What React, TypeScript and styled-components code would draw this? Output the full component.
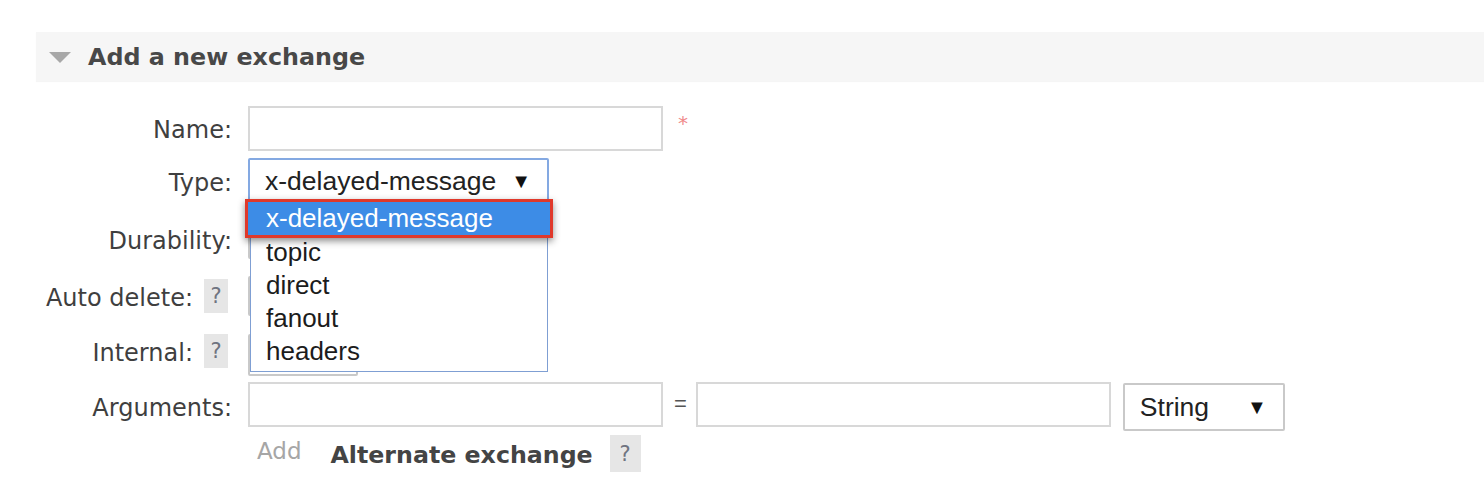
import React, { FC, Fragment } from 'react'
import styled, { createGlobalStyle } from 'styled-components'

const GlobalStyle = createGlobalStyle`
  html, body {
    margin: 0;
    padding: 0;
    background: #ffffff;
  }
  body {
    font-family: 'DejaVu Sans', Verdana, sans-serif;
    color: #444444;
  }
`

const Page = styled.div`
  padding: 32px 0 0 36px;
  overflow: hidden;
`

const SectionHeader = styled.div`
  display: flex;
  align-items: center;
  height: 49px;
  background: #f6f6f6;
  box-shadow: 0 1px 1px rgba(0, 0, 0, 0.04);
`

const Caret = styled.span`
  width: 0;
  height: 0;
  margin: 2px 17px 0 13px;
  border-left: 11px solid transparent;
  border-right: 11px solid transparent;
  border-top: 11px solid #a8a8a8;
`

const Title = styled.h2`
  margin: 0;
  font-size: 23.8px;
  font-weight: 700;
  color: #484848;
`

const Form = styled.div`
  padding-top: 20px;
`

const Row = styled.div<{ $h?: number }>`
  display: grid;
  grid-template-columns: 196px 1fr;
  column-gap: 16px;
  align-items: center;
  height: ${(p) => p.$h ?? 55}px;
`

const Label = styled.div`
  display: flex;
  justify-content: flex-end;
  align-items: center;
  padding-top: 3px;
  font-size: 24px;
  color: #3f3f3f;
  white-space: nowrap;
`

const Help = styled.span<{ $big?: boolean }>`
  display: inline-flex;
  align-items: center;
  justify-content: center;
  width: ${(p) => (p.$big ? 31 : 24)}px;
  height: ${(p) => (p.$big ? 37 : 34)}px;
  margin-left: ${(p) => (p.$big ? 17 : 11)}px;
  margin-right: 4px;
  margin-top: -3px;
  background: #e6e6e6;
  color: #6f7480;
  font-size: 21px;
`

const Controls = styled.div<{ $top?: boolean }>`
  display: flex;
  align-items: ${(p) => (p.$top ? 'flex-start' : 'center')};
  align-self: ${(p) => (p.$top ? 'start' : 'center')};
  position: relative;
`

const TextInput = styled.div<{ $mt?: number }>`
  width: 415px;
  height: 45px;
  margin-top: ${(p) => p.$mt ?? 0}px;
  box-sizing: border-box;
  border: 2px solid #d8d8d8;
  background: #fff;
`

const Required = styled.span`
  margin-left: 15px;
  margin-top: -12px;
  color: #f08a8a;
  font-size: 20px;
`

const Equals = styled.span`
  margin: 10px 9px 0 11px;
  font-family: 'Liberation Sans', Arial, sans-serif;
  font-size: 22px;
  color: #555;
`

const Select = styled.div<{ $w: number; $h?: number; $mt?: number; $focus?: boolean }>`
  display: flex;
  align-items: center;
  justify-content: space-between;
  box-sizing: border-box;
  width: ${(p) => p.$w}px;
  height: ${(p) => p.$h ?? 45}px;
  margin-top: ${(p) => p.$mt ?? 0}px;
  padding: 0 16px 0 15px;
  border: ${(p) => (p.$focus ? '2px solid #84a9e2' : '2px solid #c9c9c9')};
  border-radius: 2px;
  background: #fff;
  font-family: 'Liberation Sans', Arial, sans-serif;
  font-size: 26.5px;
  color: #222;
`

const Arrow = styled.span`
  font-size: 20px;
  color: #111;
`

const Spacer = styled.span`
  width: 12px;
`

const Options = styled.div`
  position: absolute;
  top: 42px;
  left: 2px;
  width: 298px;
  height: 172px;
  box-sizing: border-box;
  border: 1px solid #7f9fd3;
  background: #fff;
  font-family: 'Liberation Sans', Arial, sans-serif;
  font-size: 26px;
  color: #1c1c1c;
  z-index: 2;
`

const Option = styled.div<{ $selected?: boolean }>`
  display: flex;
  align-items: center;
  height: 33px;
  padding-left: 15px;
  ${(p) =>
    p.$selected &&
    `
    position: relative;
    z-index: 1;
    height: 39px;
    margin: -2px -6px -2px -6px;
    padding-left: 18px;
    box-sizing: border-box;
    border: 3px solid #e0392b;
    background: #3d8ce6;
    color: #ffffff;
    box-shadow: 0 3px 7px rgba(0, 0, 0, 0.45);
  `}
`

const AddLink = styled.span`
  margin-left: 9px;
  margin-top: -8px;
  font-size: 23px;
  color: #a6a6a6;
`

const SubTitle = styled.span`
  margin-left: 29px;
  font-size: 23.7px;
  font-weight: 700;
  color: #444;
`

const options = ['topic', 'direct', 'fanout', 'headers']

const App: FC = () => {
  return (
    <Fragment>
      <GlobalStyle />
      <Page>
        <SectionHeader>
          <Caret />
          <Title>Add a new exchange</Title>
        </SectionHeader>
        <Form>
          <Row $h={55}>
            <Label>Name:</Label>
            <Controls>
              <TextInput />
              <Required>*</Required>
            </Controls>
          </Row>
          <Row $h={51}>
            <Label>Type:</Label>
            <Controls>
              <Select $w={301} $h={47} $focus>
                x-delayed-message
                <Arrow>▼</Arrow>
              </Select>
              <Options>
                <Option $selected>x-delayed-message</Option>
                {options.map((o) => (
                  <Option key={o}>{o}</Option>
                ))}
              </Options>
            </Controls>
          </Row>
          <Row $h={64}>
            <Label>Durability:</Label>
            <Controls>
              <Select $w={150} $h={40} />
            </Controls>
          </Row>
          <Row $h={50}>
            <Label>
              Auto delete:<Help>?</Help>
            </Label>
            <Controls>
              <Select $w={110} $h={40} />
            </Controls>
          </Row>
          <Row $h={60}>
            <Label>
              Internal:<Help>?</Help>
            </Label>
            <Controls>
              <Select $w={110} $h={42} $mt={8} />
            </Controls>
          </Row>
          <Row $h={50}>
            <Label>Arguments:</Label>
            <Controls $top>
              <TextInput $mt={1} />
              <Equals>=</Equals>
              <TextInput $mt={1} />
              <Spacer />
              <Select $w={162} $h={48} $mt={2}>
                String
                <Arrow>▼</Arrow>
              </Select>
            </Controls>
          </Row>
          <Row $h={48}>
            <span />
            <Controls>
              <AddLink>Add</AddLink>
              <SubTitle>Alternate exchange</SubTitle>
              <Help $big>?</Help>
            </Controls>
          </Row>
        </Form>
      </Page>
    </Fragment>
  )
}

export default App
